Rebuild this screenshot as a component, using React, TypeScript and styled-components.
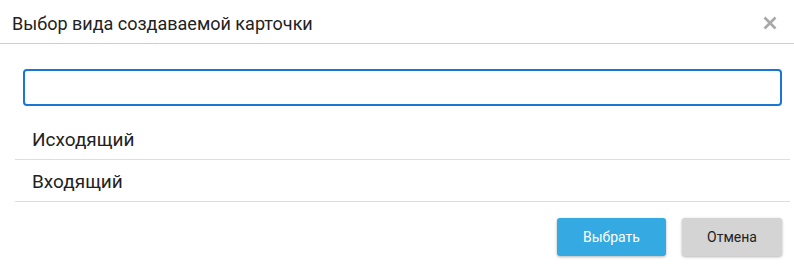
import React from "react";
import styled, { createGlobalStyle } from "styled-components";

const Global = createGlobalStyle`
  html, body { margin: 0; padding: 0; background: #fff; }
  body { font-family: Roboto, "Noto Sans", sans-serif; color: #222; }
  * { box-sizing: border-box; }
`;

const Dialog = styled.div`
  width: 794px;
  height: 272px;
  display: flex;
  flex-direction: column;
  background: #fff;
`;

const Header = styled.div`
  height: 44px;
  display: flex;
  align-items: center;
  justify-content: space-between;
  padding: 3px 16px 0 12px;
  border-bottom: 1px solid #cfcfcf;
`;

const Title = styled.div`
  font-size: 18px;
  color: #222;
`;

const Close = styled.button`
  border: 0;
  background: none;
  padding: 0;
  width: 16px;
  height: 16px;
  display: flex;
  align-items: center;
  justify-content: center;
  cursor: pointer;
`;

const Body = styled.div`
  display: flex;
  flex-direction: column;
  padding: 25px 4px 0 15px;
`;

const Search = styled.input`
  margin: 0 8px 0 8px;
  height: 37px;
  border: 2px solid #1976d2;
  border-radius: 4px;
  outline: none;
  font-family: inherit;
  font-size: 16px;
  padding: 0 10px;
`;

const List = styled.div`
  margin-top: 12px;
  display: flex;
  flex-direction: column;
`;

const Item = styled.div`
  height: 42px;
  display: flex;
  align-items: center;
  padding-left: 17px;
  padding-top: 2px;
  font-size: 19px;
  color: #222;
  border-bottom: 1px solid #dedede;
`;

const Footer = styled.div`
  display: flex;
  justify-content: flex-end;
  gap: 16px;
  padding: 16px 12px 0 0;
`;

const Button = styled.button<{ $primary?: boolean }>`
  height: 38px;
  width: ${(p) => (p.$primary ? "109px" : "100px")};
  border: 0;
  border-radius: 3px;
  font-family: inherit;
  font-size: 14px;
  background: ${(p) => (p.$primary ? "#35a9e1" : "#d4d4d4")};
  color: ${(p) => (p.$primary ? "#fff" : "#222")};
  box-shadow: 0 1px 3px rgba(0, 0, 0, 0.3);
  cursor: pointer;
`;

export default function App() {
  return (
    <>
      <Global />
      <Dialog>
        <Header>
          <Title>Выбор вида создаваемой карточки</Title>
          <Close aria-label="close">
            <svg width="14" height="14" viewBox="0 0 14 14">
              <path d="M1.5 1.5 L12.5 12.5 M12.5 1.5 L1.5 12.5" stroke="#a8a8a8" strokeWidth="2.6" strokeLinecap="butt" />
            </svg>
          </Close>
        </Header>
        <Body>
          <Search autoFocus={false} />
          <List>
            <Item>Исходящий</Item>
            <Item>Входящий</Item>
          </List>
        </Body>
        <Footer>
          <Button $primary>Выбрать</Button>
          <Button>Отмена</Button>
        </Footer>
      </Dialog>
    </>
  );
}
